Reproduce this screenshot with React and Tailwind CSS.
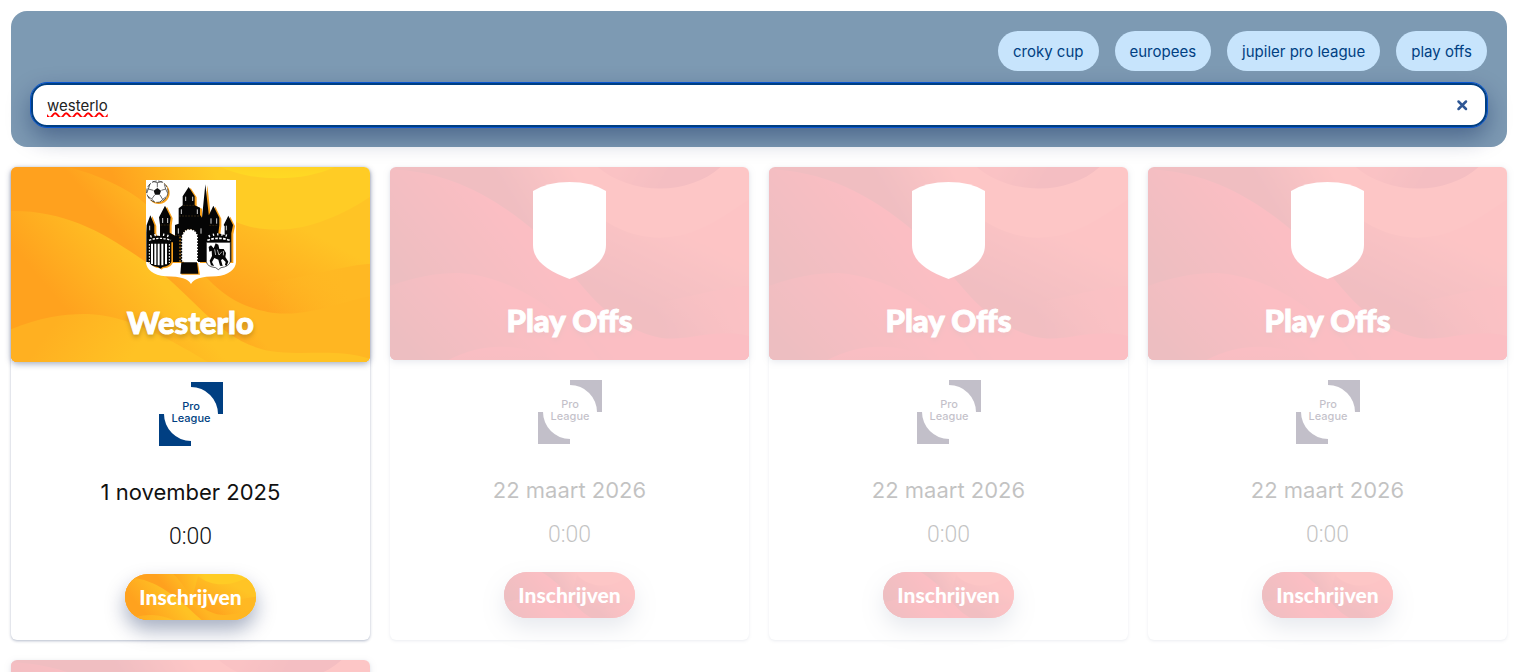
import { useId, useState } from 'react';

const tags = ['croky cup', 'europees', 'jupiler pro league', 'play offs'];

const events = [
  { title: 'Westerlo', club: true, date: '1 november 2025', time: '0:00' },
  { title: 'Play Offs', date: '22 maart 2026', time: '0:00' },
  { title: 'Play Offs', date: '22 maart 2026', time: '0:00' },
  { title: 'Play Offs', date: '22 maart 2026', time: '0:00' },
  { title: 'Play Offs', date: '22 maart 2026', time: '0:00' },
];

// Layers are painted back to front. `line` is the gradient vector: x1, y1, x2, y2
const waves = {
  orange: [
    { d: 'M0 0H1077V585H0Z', line: [330, 90, 600, -20], from: '#ffa01e', to: '#ffcc25' },
    { d: 'M630 0C720 45 880 45 970 0Z', line: [0, 0, 0, 35], from: '#ffd324', to: '#ffda24' },
    { d: 'M600 120C660 170 730 189 800 188C900 188 1000 140 1077 90V585H480Z', line: [850, 170, 720, 420], from: '#ffc425', to: '#ffa31e' },
    { d: 'M700 350C860 345 960 300 1077 290V585H700Z', line: [760, 380, 1000, 320], from: '#ffb82300', to: '#ffb823' },
    { d: 'M0 0H170C290 30 400 90 440 150C560 300 620 415 790 438C900 450 1000 400 1077 388V585H0Z', line: [410, 110, 315, 190], from: '#ffb622', to: '#ffa11e' },
    { d: 'M0 132C180 130 300 210 440 310C560 400 640 540 800 555C900 565 970 545 1077 575V585H0Z', line: [400, 285, 190, 460], from: '#ffc224', to: '#ffa21e' },
    { d: 'M0 487C90 450 160 440 230 441C340 445 450 500 590 585H0Z', line: [150, 440, 350, 585], from: '#ffb021', to: '#ffc224' },
  ],
  red: [
    { d: 'M0 0H1077V585H0Z', line: [380, 130, 560, 20], from: '#c4000e', to: '#fb2020' },
    { d: 'M620 0C720 90 900 90 995 0Z', line: [700, 0, 820, 68], from: '#ec1018', to: '#d4000f' },
    { d: 'M600 130C660 185 740 216 810 215C920 215 1000 150 1077 100V585H480Z', line: [850, 190, 740, 420], from: '#f81a1e', to: '#c8000e' },
    { d: 'M700 430C880 400 1000 360 1077 360V585H700Z', line: [800, 440, 1040, 380], from: '#f00c1800', to: '#f00c18' },
    { d: 'M0 10C160 15 300 80 440 200C560 330 600 410 700 470C800 530 850 520 920 510C980 500 1030 498 1077 510V585H0Z', line: [290, 100, 30, 310], from: '#f00014', to: '#bc000c' },
    { d: 'M0 360C80 330 150 320 210 321C330 330 440 390 520 460C570 500 600 550 630 585H0Z', line: [300, 350, 80, 560], from: '#f00014', to: '#bc000c' },
    { d: 'M170 585C270 528 400 528 490 585Z', line: [0, 535, 0, 585], from: '#f00014', to: '#e40012' },
  ],
};

function Waves({ tone }) {
  const id = useId();
  const layers = waves[tone];

  return (
    <svg
      className="absolute inset-0 h-full w-full"
      viewBox="0 0 1077 585"
      preserveAspectRatio="xMidYMid slice"
      aria-hidden="true"
    >
      <defs>
        {layers.map(({ line: [x1, y1, x2, y2], from, to }, i) => (
          <linearGradient key={i} id={`${id}-${i}`} gradientUnits="userSpaceOnUse" x1={x1} y1={y1} x2={x2} y2={y2}>
            <stop offset="0" stopColor={from} />
            <stop offset="1" stopColor={to} />
          </linearGradient>
        ))}
      </defs>
      {layers.map((wave, i) => (
        <path key={i} d={wave.d} fill={`url(#${id}-${i})`} />
      ))}
    </svg>
  );
}

const castle =
  'M52 291V204L53 180L64 151L76 180V204L80 212H93V180L90 157L108 122L125 157L122 180V203L138 212V180L149 176V130L161 121V94L179 66L197 94V121L213 128V150L219 158L229 58L240 155L236 158L253 122L271 158V180L268 205L287 210V184L284 180L298 152L312 180L307 205V291H207V213Q202 192 181 191Q162 193 159 215V291Z';

function WesterloCrest() {
  return (
    <svg className="h-[104px] w-[90px]" viewBox="51 45 270 312" role="img" aria-label="Westerlo">
      <path d="M51 45H321V292C320 312 298 332 262 334C214 335 196 341 186 357C176 341 158 335 110 334C72 332 52 312 51 292Z" fill="#fff" />
      <path d={castle} transform="translate(6 3)" fill="#f9a11b" />
      <path d={castle} fill="#050505" />
      <path d="M157 290V215Q164 192 181 192Q203 192 207 215V290Z" fill="#fff" />
      <path d="M157 290V215Q164 192 181 192Q203 192 207 215V290" fill="none" stroke="#050505" strokeWidth="5" strokeDasharray="5 4" />
      <path d="M153 290V215" stroke="#f9a11b" strokeWidth="3" strokeDasharray="5 5" />
      <path d="M159 294H207L213 329H157Z" fill="#f9a11b" />
      <path d="M157 292H204L208 326H154Z" fill="#050505" />

      <g stroke="#fff" strokeWidth="2.5" fill="none">
        <path d="M170 95V108M191 95V108M157 133V147M205 133V147M148 190V206M216 190V206M101 159V174M116 159V174M246 160V176M263 160V176M62 182V196M292 182V196" />
        <path d="M163 121H195M150 153H211M95 180H120M241 181H267M138 211H154" stroke="#8a6424" strokeWidth="1" strokeDasharray="6 3" />
      </g>

      {/* ball */}
      <circle cx="89" cy="84" r="33" fill="#f9a11b" />
      <circle cx="85" cy="80" r="32" fill="#fff" stroke="#111" strokeWidth="2" strokeDasharray="15 4" />
      <path d="M85 69L96 77L92 89H78L74 77Z" fill="#111" />
      <path d="M85 67V53L71 49M85 53L100 50M97 76L110 72L115 83M110 72L106 58M93 90L101 103L94 110M101 103L112 95M77 90L68 102L76 110M68 102L57 94M73 76L58 72L53 84M58 72L63 57" fill="none" stroke="#222" strokeWidth="2" />

      {/* left shield */}
      <path d="M64 232H132V290Q130 308 102 310L98 314L94 310Q66 308 64 290Z" fill="#f9a11b" />
      <path d="M59 229H127V289Q125 303 101 306L94 311L87 306Q61 303 59 289Z" fill="#050505" />
      <path d="M69 236V297M79 236V300M89 236V301M100 236V301M111 236V298" stroke="#fff" strokeWidth="6" />
      <path d="M121 237V294M61 237V294" stroke="#fff" strokeWidth="3" strokeDasharray="5 4" />
      <path d="M60 226Q92 214 126 226" fill="none" stroke="#fff" strokeWidth="4" strokeDasharray="7 4" />
      <path d="M64 215Q92 202 122 215" fill="none" stroke="#fff" strokeWidth="7" strokeDasharray="4 9" />

      {/* right shield with rider */}
      <path d="M232 232H304V290Q300 305 276 308L268 314L260 308Q234 305 232 290Z" fill="#fff" stroke="#111" strokeWidth="2" />
      <path d="M235 226Q268 214 302 226" fill="none" stroke="#fff" strokeWidth="5" strokeDasharray="8 4" />
      <path d="M239 214Q268 202 300 214" fill="none" stroke="#fff" strokeWidth="7" strokeDasharray="4 9" />
      <path d="M239 246L246 241L254 250L260 235L268 239L271 252L284 252L291 264L289 276L298 290L293 303L288 300L290 291L281 282L276 285L281 303L273 302L268 284L256 279L249 291L255 303L246 301L242 287L249 273L248 257L241 260Z" fill="#050505" />
      <path d="M257 253L260 270M265 254L270 270L279 260M284 258L283 271" stroke="#fff" strokeWidth="2" fill="none" />
    </svg>
  );
}

function Shield() {
  return (
    <svg className="h-[97px] w-[73px]" viewBox="0 0 73 97" aria-hidden="true">
      <path d="M0 9Q14 0 36.500 0Q59 0 73 9V63C73 79 58 89 36.500 97C15 89 0 79 0 63Z" fill="#fff" />
    </svg>
  );
}

function ProLeague({ active }) {
  return (
    <svg
      className={active ? 'h-16 w-16 text-[#003f82]' : 'h-16 w-16 text-[#10062e]'}
      viewBox="0 0 64 64"
      role="img"
      aria-label="Pro League"
    >
      <path d="M32 0H64V32H59A27 27 0 0 0 32 5Z" fill="currentColor" />
      <path d="M0 32H5A27 27 0 0 0 32 59V64H0Z" fill="currentColor" />
      <g className="font-['Inter',sans-serif] text-[11px] font-medium" fill="currentColor" textAnchor="middle">
        <text x="32" y="28">Pro</text>
        <text x="32" y="40">League</text>
      </g>
    </svg>
  );
}

function EventCard({ event }) {
  const { title, club, date, time } = event;
  const tone = club ? 'orange' : 'red';

  return (
    <article
      className={`flex flex-col items-center rounded-md bg-white pb-5 shadow-[0_1px_3px_rgba(0,25,80,0.3)] ${club ? '' : 'opacity-25'}`}
    >
      <header
        className={`relative flex w-full flex-col items-center overflow-hidden rounded-md shadow-[0_2px_6px_rgba(0,25,80,0.35)] ${club ? 'h-[195px] pt-[13px]' : 'h-[193px] pt-[15px]'}`}
      >
        <Waves tone={tone} />
        <div className={`relative ${club ? 'h-[104px]' : 'h-[100px]'}`}>
          {club ? <WesterloCrest /> : <Shield />}
        </div>
        <h2 className="relative mt-5 font-['Lato',sans-serif] text-[31px] leading-9 font-black text-white [-webkit-text-stroke:1px_white] [text-shadow:0_3px_5px_rgba(0,0,0,0.25)]">
          {title}
        </h2>
      </header>
      <div className="mt-5">
        <ProLeague active={club} />
      </div>
      <p className="mt-7 font-['Inter',sans-serif] text-[22px] leading-9 text-[#111]">{date}</p>
      <p className="mt-2.5 font-['Roboto',sans-serif] text-[23px] leading-[34px] font-light text-[#111]">{time}</p>
      <button
        type="button"
        className="relative mt-5 h-[46px] w-[131px] rounded-full shadow-[0_10px_20px_rgba(0,25,80,0.35)]"
      >
        <span className="absolute inset-0 overflow-hidden rounded-full">
          <Waves tone={tone} />
        </span>
        <span className="relative font-['Lato',sans-serif] text-[21px] font-black text-white">Inschrijven</span>
      </button>
    </article>
  );
}

export default function App() {
  const [query, setQuery] = useState('westerlo');

  return (
    <main className="flex flex-col gap-5 bg-white pt-[11px] pr-8 pb-5 pl-[11px] font-['Inter',sans-serif]">
      <search className="block rounded-2xl bg-[#7d9ab3] p-5">
        <div className="flex flex-wrap justify-end gap-4">
          {tags.map((tag) => (
            <button key={tag} type="button" className="h-10 rounded-full bg-[#c7e4fc] px-[15px] pt-0.5 text-[15px] text-[#003f82]">
              {tag}
            </button>
          ))}
        </div>
        <div className="mt-3 flex h-11 items-center rounded-2xl border-2 border-[#003f82] bg-white pr-[17px] pl-3.5 shadow-[0_10px_24px_rgba(0,25,80,0.4)] outline-1 outline-[#0a56d0]">
          <input
            type="text"
            aria-label="Zoeken"
            value={query}
            onChange={(e) => setQuery(e.target.value)}
            className="min-w-0 flex-1 pt-0.5 text-[15px] text-[#222] underline decoration-[#f00] decoration-wavy decoration-2 underline-offset-1 outline-none"
          />
          <button type="button" aria-label="Wissen" onClick={() => setQuery('')}>
            <svg className="h-3 w-3" viewBox="0 0 12 12" aria-hidden="true">
              <path d="M2.500 2.500L10 10M10 2.500L2.500 10" stroke="#2f5795" strokeWidth="2.500" strokeLinecap="round" />
            </svg>
          </button>
        </div>
      </search>

      <section className="grid grid-cols-4 gap-5">
        {events.map((event, i) => (
          <EventCard key={i} event={event} />
        ))}
      </section>
    </main>
  );
}
